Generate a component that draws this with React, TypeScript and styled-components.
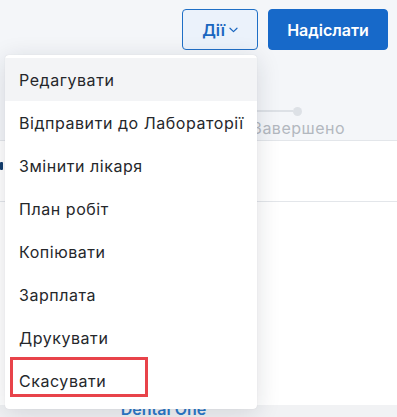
import React from "react";
import styled, { createGlobalStyle } from "styled-components";

const GlobalStyle = createGlobalStyle`
  html, body { margin: 0; padding: 0; }
  body { font-family: Inter, "Noto Sans", sans-serif; background: #f4f6f9; }
`;

const Page = styled.div`
  position: relative;
  width: 397px;
  height: 417px;
  overflow: hidden;
  background: #f4f6f9;
  display: flex;
  flex-direction: column;
`;

const Header = styled.div`
  display: flex;
  justify-content: flex-end;
  align-items: flex-start;
  gap: 10px;
  padding: 9px 9px 0 0;
  height: 46px;
`;

const Button = styled.button<{ $primary?: boolean }>`
  height: 41px;
  box-sizing: border-box;
  border-radius: 4px;
  font-family: Inter, "Noto Sans", sans-serif;
  font-size: 16px;
  font-weight: 600;
  display: flex;
  align-items: center;
  justify-content: center;
  gap: 4px;
  cursor: pointer;
  border: 1px solid ${(p) => (p.$primary ? "#1769c9" : "#1f6fc6")};
  background: ${(p) => (p.$primary ? "#1769c9" : "#ebf2fb")};
  color: ${(p) => (p.$primary ? "#ffffff" : "#1a66bf")};
  width: ${(p) => (p.$primary ? "120px" : "76px")};
  padding: 0;
`;

const StepperBand = styled.div`
  height: 85px;
  border-bottom: 1px solid #e3e6ea;
  display: flex;
  justify-content: flex-end;
  position: relative;
`;

const Step = styled.div`
  width: 150px;
  padding-top: 52px;
  display: flex;
  flex-direction: column;
  align-items: flex-start;
  position: relative;
`;

const StepTrack = styled.div`
  display: flex;
  align-items: center;
  height: 8px;
  margin-left: -40px;
`;

const StepLine = styled.div`
  width: 86px;
  height: 2px;
  background: #dde1e6;
`;

const StepDot = styled.div`
  width: 9px;
  height: 9px;
  border-radius: 50%;
  background: #dde1e6;
`;

const StepLabel = styled.div`
  margin-top: 3px;
  margin-left: 5px;
  font-size: 16px;
  letter-spacing: 0.5px;
  color: #b3b8bf;
`;

const WhiteArea = styled.div`
  flex: 1;
  background: #ffffff;
  display: flex;
  flex-direction: column;
`;

const InfoRow = styled.div`
  height: 60px;
  border-bottom: 1px solid #e3e6ea;
  display: flex;
  align-items: center;
`;

const EdgeIcon = styled.div`
  width: 3px;
  height: 8px;
  background: #123d6e;
  border-radius: 1px;
  margin-top: -10px;
`;

const Spacer = styled.div`
  flex: 1;
`;

const Footer = styled.div`
  height: 12px;
  background: #f1f2f4;
  display: flex;
  justify-content: center;
`;

const FooterText = styled.div`
  margin-top: -6px;
  margin-left: -70px;
  font-size: 16px;
  font-weight: 600;
  color: #2a78c8;
  line-height: 20px;
`;

const Menu = styled.ul`
  position: absolute;
  left: 5px;
  top: 55px;
  width: 252px;
  box-sizing: border-box;
  margin: 0;
  padding: 3px 0 7px;
  list-style: none;
  background: #ffffff;
  border-radius: 4px;
  box-shadow: 0 4px 24px rgba(20, 30, 50, 0.14), 0 0 1px rgba(20, 30, 50, 0.15);
`;

const MenuItem = styled.li<{ $active?: boolean }>`
  height: 43px;
  display: flex;
  align-items: center;
  padding-left: 14px;
  font-size: 16px;
  letter-spacing: 0.55px;
  color: #25272b;
  background: ${(p) => (p.$active ? "#f3f4f6" : "transparent")};
  position: relative;
`;

const Highlight = styled.div`
  position: absolute;
  left: 5px;
  top: -2px;
  width: 138px;
  height: 40px;
  box-sizing: border-box;
  border: 3px solid #e8434a;
  pointer-events: none;
`;

const Chevron = () => (
  <svg width="9" height="6" viewBox="0 0 9 6" fill="none">
    <path d="M1 1.2 L4.5 4.6 L8 1.2" stroke="#1a66bf" strokeWidth="1.2" strokeLinecap="round" strokeLinejoin="round" />
  </svg>
);

const items = [
  "Редагувати",
  "Відправити до Лабораторії",
  "Змінити лікаря",
  "План робіт",
  "Копіювати",
  "Зарплата",
  "Друкувати",
  "Скасувати",
];

export default function App() {
  return (
    <>
      <GlobalStyle />
      <Page>
        <Header>
          <Button>
            Дії
            <Chevron />
          </Button>
          <Button $primary>Надіслати</Button>
        </Header>
        <StepperBand>
          <Step>
            <StepTrack>
              <StepLine />
              <StepDot />
            </StepTrack>
            <StepLabel>Завершено</StepLabel>
          </Step>
        </StepperBand>
        <WhiteArea>
          <InfoRow>
            <EdgeIcon />
          </InfoRow>
          <Spacer />
          <Footer>
            <FooterText>Dental One</FooterText>
          </Footer>
        </WhiteArea>
        <Menu>
          {items.map((label, i) => (
            <MenuItem key={label} $active={i === 0}>
              {label}
              {i === items.length - 1 && <Highlight />}
            </MenuItem>
          ))}
        </Menu>
      </Page>
    </>
  );
}
